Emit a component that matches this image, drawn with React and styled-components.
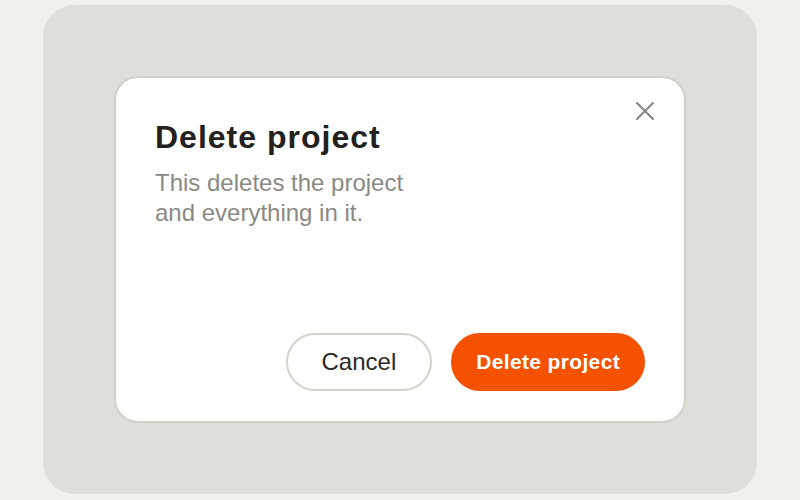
import React from 'react'
import styled, { createGlobalStyle } from 'styled-components'

const GlobalStyle = createGlobalStyle`
  html, body {
    margin: 0;
    padding: 0;
    background: #f1f0ec;
    font-family: "Liberation Sans", Arial, sans-serif;
  }
  * { box-sizing: border-box; }
`

const Page = styled.div`
  width: 800px;
  height: 500px;
  padding: 5px 43px 6px;
`

const Frame = styled.div`
  height: 489px;
  border-radius: 32px;
  background: #dfdeda;
  display: flex;
  align-items: center;
  justify-content: center;
`

const Modal = styled.div`
  position: relative;
  width: 572px;
  height: 347px;
  background: #ffffff;
  border: 2px solid #d3d0c7;
  border-radius: 24px;
  padding: 39px 39px 30px 39px;
  display: flex;
  flex-direction: column;
`

const Title = styled.h2`
  margin: 0;
  font-size: 32px;
  line-height: 40px;
  font-weight: 700;
  letter-spacing: 1px;
  color: #22211d;
`

const Body = styled.p`
  margin: 11px 0 0;
  max-width: 270px;
  font-size: 24px;
  line-height: 30px;
  color: #8a8984;
`

const CloseBtn = styled.button`
  position: absolute;
  top: 24px;
  right: 30px;
  width: 18px;
  height: 18px;
  padding: 0;
  border: none;
  background: none;
  display: flex;
  cursor: pointer;
`

const Actions = styled.div`
  margin-top: auto;
  display: flex;
  justify-content: flex-end;
  gap: 19px;
`

const Button = styled.button`
  height: 58px;
  padding: 0 ${p => p.$padX}px;
  border-radius: 29px;
  font-family: inherit;
  cursor: pointer;
  border: 2px solid ${p => (p.$danger ? '#f45100' : '#d6d3ca')};
  background: ${p => (p.$danger ? '#f45100' : '#ffffff')};
  color: ${p => (p.$danger ? '#ffffff' : '#2a2926')};
  font-size: ${p => (p.$danger ? '21px' : '24px')};
  font-weight: ${p => (p.$danger ? 700 : 400)};
  letter-spacing: ${p => (p.$danger ? '0.35px' : '0')};
`

export default function App() {
  return (
    <>
      <GlobalStyle />
      <Page>
        <Frame>
          <Modal>
            <CloseBtn aria-label="Close">
              <svg width="18" height="18" viewBox="0 0 18 18">
                <path d="M1 1l16 16M17 1L1 17" stroke="#85847f" strokeWidth="2" strokeLinecap="round" fill="none" />
              </svg>
            </CloseBtn>
            <Title>Delete project</Title>
            <Body>This deletes the project and everything in it.</Body>
            <Actions>
              <Button $padX={34}>Cancel</Button>
              <Button $danger $padX={23}>Delete project</Button>
            </Actions>
          </Modal>
        </Frame>
      </Page>
    </>
  )
}
